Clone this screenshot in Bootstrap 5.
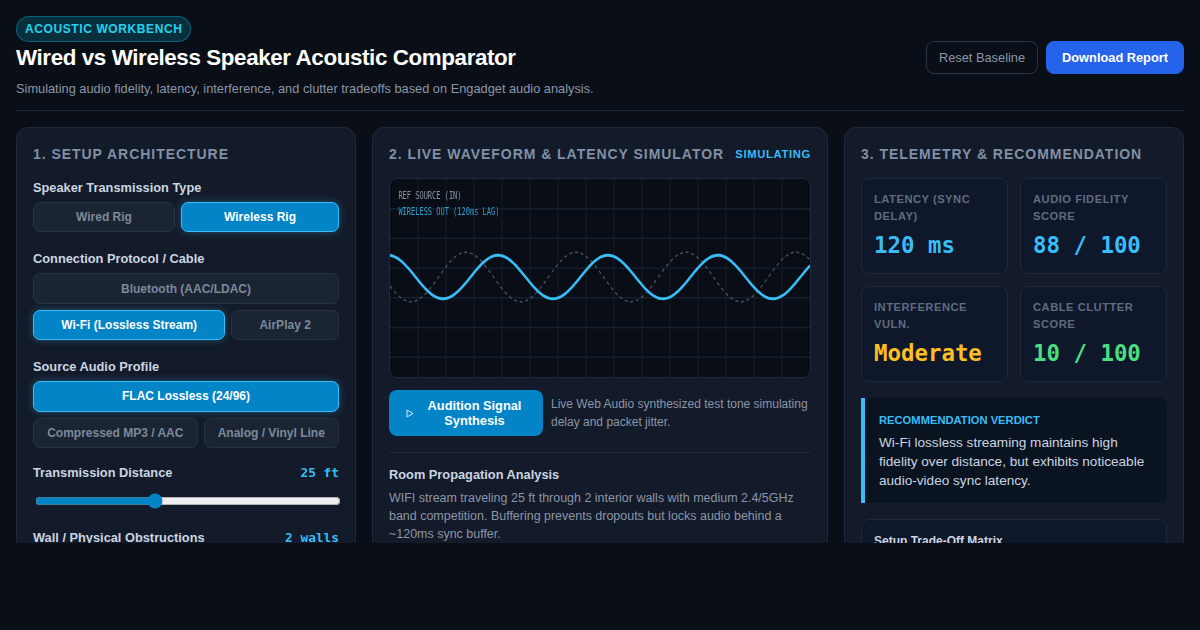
<!DOCTYPE html>
<html lang="en">
<head>
    <meta charset="UTF-8">
    <meta name="viewport" content="width=device-width, initial-scale=1.0">
    <title>Acoustic Workbench</title>
    <link href="https://cdn.jsdelivr.net/npm/bootstrap@5.3.0/dist/css/bootstrap.min.css" rel="stylesheet">
    <style>
        body {
            background-color: #0a0e17;
            font-family: "Liberation Sans", Arial, sans-serif;
            color: #cbd5e1;
            height: 630px;
            overflow: hidden;
        }

        .bench-wrap { padding: 16px 16px 0; }

        .bench-head {
            border-bottom: 1px solid #1e293b;
            padding-bottom: 11px;
            margin-bottom: 16px;
        }

        .bench-tag {
            display: inline-block;
            padding: 4px 8px;
            font-size: 12px;
            line-height: 16px;
            font-weight: 700;
            letter-spacing: .6px;
            color: #22d3ee;
            background: rgba(6, 182, 212, .2);
            border: 1px solid rgba(6, 182, 212, .4);
            border-radius: 999px;
        }

        .bench-title {
            font-size: 22.4px;
            line-height: 32px;
            font-weight: 700;
            letter-spacing: -.4px;
            color: #fff;
            margin: 0 0 5px;
        }

        .bench-sub {
            font-size: 12.8px;
            line-height: 20px;
            color: #8b96a8;
            margin: 0;
        }

        .btn-reset, .btn-report {
            font-size: 12.8px;
            line-height: 19px;
            padding: 6px 12px;
            border-radius: 8px;
        }

        .btn-reset { color: #8b96a8; border: 1px solid #2a3648; background: transparent; }
        .btn-report { color: #fff; font-weight: 700; background: #2563eb; border: 1px solid #2563eb; padding: 6px 15px; }

        .bench-grid {
            display: grid;
            grid-template-columns: 340px 456px 340px;
            gap: 16px;
            height: 416px;
            overflow: hidden;
        }

        .panel-box {
            background: #131a29;
            border: 1px solid #1e293b;
            border-radius: 12px;
            padding: 16px;
        }

        .panel-title {
            font-size: 14px;
            line-height: 21px;
            font-weight: 700;
            letter-spacing: .96px;
            text-transform: uppercase;
            color: #8190a5;
            margin: 0 0 13px;
        }

        .sim-flag {
            font-size: 11.2px;
            font-weight: 700;
            letter-spacing: .7px;
            color: #38bdf8;
            margin-bottom: 13px;
        }

        .ctl-label {
            font-size: 12.8px;
            line-height: 19px;
            font-weight: 700;
            color: #cbd5e1;
            margin-bottom: 5px;
        }

        .ctl-group { margin-bottom: 17px; }
        .ctl-group.tight { margin-bottom: 15px; }
        .ctl-group.wide { margin-bottom: 19px; }

        .opt-row { display: flex; flex-wrap: wrap; gap: 6px; }

        .opt-btn {
            flex: 1 1 auto;
            font-size: 12px;
            line-height: 18px;
            font-weight: 700;
            padding: 5.2px 12px;
            color: #7d899b;
            background: #1a2433;
            border: 1px solid #263244;
            border-radius: 7px;
        }

        .opt-btn.is-on {
            color: #fff;
            background: #0284c7;
            border-color: #38bdf8;
            box-shadow: 0 0 8px rgba(56, 189, 248, .35);
        }

        .mono-val {
            font-family: "DejaVu Sans Mono", monospace;
            font-size: 12.8px;
            font-weight: 700;
            color: #38bdf8;
        }

        .range-head { margin-bottom: 11px; }

        .dist-range { width: 100%; accent-color: #0284c7; display: block; margin: 2px; height: 16px; }

        .scope-box {
            height: 200px;
            background: #090d15;
            border: 1px solid #1e293b;
            border-radius: 8px;
            overflow: hidden;
        }

        .scope-box svg { display: block; width: 100%; height: 100%; filter: blur(.3px); }

        .scope-txt { font-family: "DejaVu Sans Mono", monospace; font-size: 10px; }

        .btn-audition {
            flex: 0 0 154px;
            font-size: 12.8px;
            line-height: 15px;
            font-weight: 700;
            color: #fff;
            background: #0284c7;
            border: 0;
            border-radius: 8px;
            padding: 8px 16px 8px 17px;
        }

        .note-txt { font-size: 12px; line-height: 18px; color: #8b96a8; margin: 0; }
        .room-txt { font-size: 12.48px; line-height: 18px; color: #8b96a8; margin: 0; }

        .room-sec { border-top: 1px solid #1e293b; margin-top: 16px; padding-top: 12px; }

        .room-head { font-size: 12.8px; line-height: 19px; font-weight: 700; color: #cbd5e1; margin: 0 0 5px; }

        .tele-grid { display: grid; grid-template-columns: 1fr 1fr; gap: 12px; margin-bottom: 16px; }

        .tele-card {
            background: #0f172a;
            border: 1px solid #1e293b;
            border-radius: 8px;
            padding: 12px;
            height: 96px;
        }

        .tele-name {
            font-size: 11.2px;
            line-height: 16.8px;
            font-weight: 700;
            letter-spacing: .5px;
            text-transform: uppercase;
            color: #5f6c80;
            margin-bottom: 5px;
        }

        .tele-num {
            font-family: "DejaVu Sans Mono", monospace;
            font-size: 22.4px;
            line-height: 30px;
            font-weight: 700;
        }

        .verdict-box {
            background: #0a1320;
            border-left: 4px solid #38bdf8;
            border-radius: 0 8px 8px 0;
            padding: 14px 14px 13px;
            margin-bottom: 16px;
        }

        .verdict-tag { font-size: 11.2px; line-height: 16px; font-weight: 700; color: #38bdf8; text-transform: uppercase; margin-bottom: 5px; }
        .verdict-txt { font-size: 13.6px; line-height: 19px; color: #cbd5e1; margin: 0; }

        .matrix-box { background: #0f172a; border: 1px solid #1e293b; border-radius: 8px; padding: 12px; }
        .matrix-head { font-size: 12px; line-height: 18px; font-weight: 700; color: #cbd5e1; }
    </style>
</head>
<body>
<div class="bench-wrap">
    <header class="bench-head d-flex justify-content-between align-items-center">
        <div>
            <span class="bench-tag">ACOUSTIC WORKBENCH</span>
            <h1 class="bench-title">Wired vs Wireless Speaker Acoustic Comparator</h1>
            <p class="bench-sub">Simulating audio fidelity, latency, interference, and clutter tradeoffs based on Engadget audio analysis.</p>
        </div>
        <div class="d-flex gap-2">
            <button class="btn btn-reset">Reset Baseline</button>
            <button class="btn btn-report">Download Report</button>
        </div>
    </header>

    <main class="bench-grid">
        <section class="panel-box">
            <h2 class="panel-title">1. Setup Architecture</h2>

            <div class="ctl-group">
                <div class="ctl-label">Speaker Transmission Type</div>
                <div class="opt-row">
                    <button class="opt-btn">Wired Rig</button>
                    <button class="opt-btn is-on">Wireless Rig</button>
                </div>
            </div>

            <div class="ctl-group">
                <div class="ctl-label">Connection Protocol / Cable</div>
                <div class="opt-row">
                    <button class="opt-btn">Bluetooth (AAC/LDAC)</button>
                    <button class="opt-btn is-on">Wi-Fi (Lossless Stream)</button>
                    <button class="opt-btn">AirPlay 2</button>
                </div>
            </div>

            <div class="ctl-group tight">
                <div class="ctl-label">Source Audio Profile</div>
                <div class="opt-row">
                    <button class="opt-btn is-on">FLAC Lossless (24/96)</button>
                    <button class="opt-btn">Compressed MP3 / AAC</button>
                    <button class="opt-btn">Analog / Vinyl Line</button>
                </div>
            </div>

            <div class="ctl-group wide">
                <div class="d-flex justify-content-between ctl-label range-head">
                    <span>Transmission Distance</span><span class="mono-val">25 ft</span>
                </div>
                <input class="dist-range" type="range" min="1" max="63" value="25">
            </div>

            <div class="ctl-group">
                <div class="d-flex justify-content-between ctl-label range-head">
                    <span>Wall / Physical Obstructions</span><span class="mono-val">2 walls</span>
                </div>
                <input class="dist-range" type="range" min="0" max="6" value="2">
            </div>
        </section>

        <section class="panel-box">
            <div class="d-flex justify-content-between align-items-center">
                <h2 class="panel-title">2. Live Waveform &amp; Latency Simulator</h2>
                <span class="sim-flag">SIMULATING</span>
            </div>

            <div class="scope-box">
                <svg viewBox="0 0 600 200" preserveAspectRatio="none">
                    <g id="scopeGrid" stroke="#162030" stroke-width="1.4"></g>
                    <text class="scope-txt" x="12" y="20" fill="#8a94a3">REF SOURCE (IN)</text>
                    <text class="scope-txt" x="12" y="36" fill="#2f9fd2">WIRELESS OUT (120ms LAG)</text>
                    <path id="waveRef" fill="none" stroke="#4d5461" stroke-width="1.5" stroke-dasharray="4 4"></path>
                    <path id="waveOut" fill="none" stroke="#38bdf8" stroke-width="3"></path>
                </svg>
            </div>

            <div class="d-flex align-items-center gap-2 mt-2 pt-1">
                <button class="btn-audition d-flex align-items-center gap-2">
                    <svg width="8" height="9" viewBox="0 0 8 9" class="flex-shrink-0"><path d="M1 1 L7 4.5 L1 8 Z" fill="none" stroke="#d5ecf8" stroke-width="1"/></svg>
                    <span>Audition Signal Synthesis</span>
                </button>
                <p class="note-txt">Live Web Audio synthesized test tone simulating delay and packet jitter.</p>
            </div>

            <div class="room-sec">
                <h3 class="room-head">Room Propagation Analysis</h3>
                <p class="room-txt">WIFI stream traveling 25 ft through 2 interior walls with medium 2.4/5GHz band competition. Buffering prevents dropouts but locks audio behind a ~120ms sync buffer.</p>
            </div>
        </section>

        <section class="panel-box">
            <h2 class="panel-title">3. Telemetry &amp; Recommendation</h2>

            <div class="tele-grid">
                <div class="tele-card">
                    <div class="tele-name">Latency (Sync Delay)</div>
                    <div class="tele-num" style="color:#38bdf8">120 ms</div>
                </div>
                <div class="tele-card">
                    <div class="tele-name">Audio Fidelity Score</div>
                    <div class="tele-num" style="color:#38bdf8">88 / 100</div>
                </div>
                <div class="tele-card">
                    <div class="tele-name">Interference Vuln.</div>
                    <div class="tele-num" style="color:#fbbf24">Moderate</div>
                </div>
                <div class="tele-card">
                    <div class="tele-name">Cable Clutter Score</div>
                    <div class="tele-num" style="color:#4ade80">10 / 100</div>
                </div>
            </div>

            <div class="verdict-box">
                <div class="verdict-tag">Recommendation Verdict</div>
                <p class="verdict-txt">Wi-Fi lossless streaming maintains high fidelity over distance, but exhibits noticeable audio-video sync latency.</p>
            </div>

            <div class="matrix-box">
                <div class="matrix-head">Setup Trade-Off Matrix</div>
            </div>
        </section>
    </main>
</div>

<script>
    // canvas-style scope: 600x200 logical units, stretched to the box
    const grid = document.getElementById("scopeGrid");
    let lines = "";
    for (let x = 40; x < 600; x += 40) lines += `<line x1="${x}" y1="0" x2="${x}" y2="200"/>`;
    for (let y = 30; y < 200; y += 30) lines += `<line x1="0" y1="${y}" x2="600" y2="${y}"/>`;
    grid.innerHTML = lines;

    function wave(amp, peakAt) {
        let d = "";
        for (let x = 0; x <= 600; x += 3) {
            const y = 99 - amp * Math.cos(0.04 * (x - peakAt));
            d += (x ? "L" : "M") + x + " " + y.toFixed(2) + " ";
        }
        return d;
    }
    document.getElementById("waveRef").setAttribute("d", wave(25, 108.6));
    document.getElementById("waveOut").setAttribute("d", wave(22, 154.3));
</script>
<script src="https://cdn.jsdelivr.net/npm/bootstrap@5.3.0/dist/js/bootstrap.bundle.min.js"></script>
</body>
</html>
